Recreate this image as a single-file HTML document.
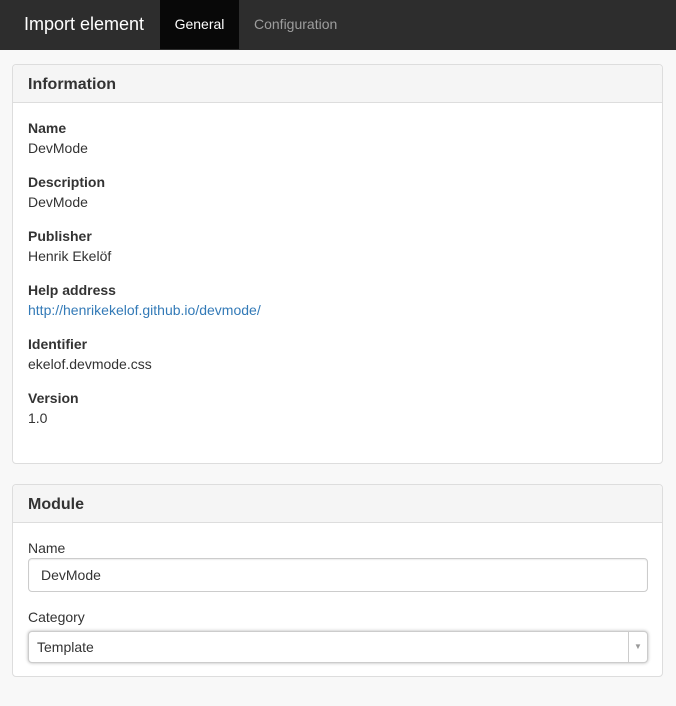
<!DOCTYPE html>
<html><head><style>
*{box-sizing:border-box;margin:0;padding:0}
body{width:676px;height:706px;background:#f8f8f8;font-family:"Liberation Sans",Helvetica,Arial,sans-serif;font-size:14px;color:#333;overflow:hidden}
.nav{height:50px;background:#2d2d2d;position:relative}
.brand{position:absolute;left:24px;top:0;line-height:48px;font-size:18px;color:#fff}
.tab{position:absolute;top:0;height:49px;line-height:48px;font-size:14px}
.t1{left:160px;width:79px;background:#080808;color:#fff;text-align:center}
.t2{left:254px;color:#9d9d9d}
.panel{position:absolute;left:12px;width:651px;background:#fff;border:1px solid #ddd;border-radius:4px}
.ph{height:38px;background:#f5f5f5;border-bottom:1px solid #ddd;font-weight:bold;font-size:16px;line-height:40px;padding-left:15px;border-radius:4px 4px 0 0}
.g{position:absolute;left:15px;line-height:20px}
.g b{display:block}
a{color:#337ab7;text-decoration:none}
.lbl{position:absolute;left:15px;line-height:20px}
.inp{position:absolute;left:15px;width:620px;border:1px solid #ccc;border-radius:4px;background:#fff;padding-left:12px;box-shadow:inset 0 1px 1px rgba(0,0,0,.075)}
</style></head><body>
<div class="nav"><div class="brand">Import element</div><div class="tab t1">General</div><div class="tab t2">Configuration</div></div>
<div class="panel" style="top:64px;height:400px">
<div class="ph">Information</div>
<div class="g" style="top:53px"><b>Name</b>DevMode</div>
<div class="g" style="top:107px"><b>Description</b>DevMode</div>
<div class="g" style="top:161px"><b>Publisher</b>Henrik Ekelöf</div>
<div class="g" style="top:215px"><b>Help address</b><a>http://henrikekelof.github.io/devmode/</a></div>
<div class="g" style="top:269px"><b>Identifier</b>ekelof.devmode.css</div>
<div class="g" style="top:323px"><b>Version</b>1.0</div>
</div>
<div class="panel" style="top:484px;height:193px">
<div class="ph">Module</div>
<div class="lbl" style="top:53px">Name</div>
<div class="inp" style="top:73px;height:34px;line-height:32px">DevMode</div>
<div class="lbl" style="top:122px">Category</div>
<div class="inp" style="top:146px;height:32px;line-height:30px;padding-left:8px;box-shadow:0 0 3px rgba(0,0,0,.3)">Template<div style="position:absolute;right:0;top:0;width:19px;height:30px;border-left:1px solid #ccc;color:#999;font-size:8px;text-align:center;line-height:30px">▼</div></div>
</div>
</body></html>
